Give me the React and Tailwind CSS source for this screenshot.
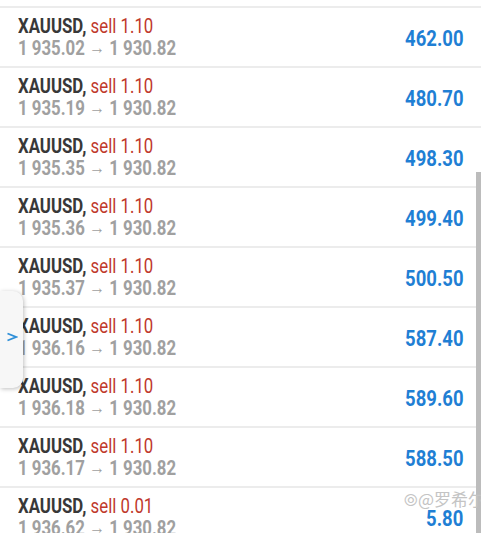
const trades = [
  { open: "1 935.02", lots: "1.10", profit: "462.00" },
  { open: "1 935.19", lots: "1.10", profit: "480.70" },
  { open: "1 935.35", lots: "1.10", profit: "498.30" },
  { open: "1 935.36", lots: "1.10", profit: "499.40" },
  { open: "1 935.37", lots: "1.10", profit: "500.50" },
  { open: "1 936.16", lots: "1.10", profit: "587.40" },
  { open: "1 936.18", lots: "1.10", profit: "589.60" },
  { open: "1 936.17", lots: "1.10", profit: "588.50" },
  { open: "1 936.62", lots: "0.01", profit: "5.80" },
];

function TradeRow({ trade }) {
  return (
    <div className="h-[60px] shrink-0 border-t-2 border-[#ececec] flex items-start justify-between pl-[18px] pr-[18px] pt-[7px]">
      <div className="flex flex-col origin-left scale-x-[0.84]">
        <div className="text-[20px] leading-[22px] whitespace-nowrap">
          <span className="font-bold text-[#383838]">XAUUSD,</span>{" "}
          <span className="text-[#c0392b]">sell {trade.lots}</span>
        </div>
        <div className="text-[20px] leading-[22px] font-bold text-[#a0a0a0] whitespace-nowrap">
          {trade.open} <span className="text-[19px] font-normal relative -top-[1px]">→</span> 1 930.82
        </div>
      </div>
      <div className="self-center -mt-[5px] origin-right scale-x-[0.84] text-[22px] font-bold text-[#1f7fd4]">{trade.profit}</div>
    </div>
  );
}

export default function App() {
  return (
    <div className="relative w-[481px] h-[533px] overflow-hidden bg-white font-['Roboto',sans-serif]">
      <div className="flex flex-col pt-[6px]">
        {trades.map((t, i) => (
          <TradeRow key={i} trade={t} />
        ))}
      </div>

      {/* side drawer handle */}
      <div className="absolute left-0 top-[291px] w-[23px] h-[97px] bg-[#f7f7f7] rounded-r-[10px] shadow-[1px_1px_4px_rgba(0,0,0,0.25)] flex items-center justify-center">
        <svg width="12" height="12" viewBox="0 0 12 12" className="mt-[-6px]">
          <polyline points="1.5,2.5 10,6 1.5,9.5" fill="none" stroke="#2e8fd8" strokeWidth="1.8" />
        </svg>
      </div>

      {/* scrollbar */}
      <div className="absolute right-0 top-[172px] bottom-0 w-[5px] bg-[#bcbcbc]" />

      {/* watermark */}
      <div className="absolute right-[-4px] top-[486px] text-[17px] text-[#c4c4c4] whitespace-nowrap font-['Noto_Sans_CJK_SC',sans-serif]">
        ⦾@罗希尔
      </div>
    </div>
  );
}
